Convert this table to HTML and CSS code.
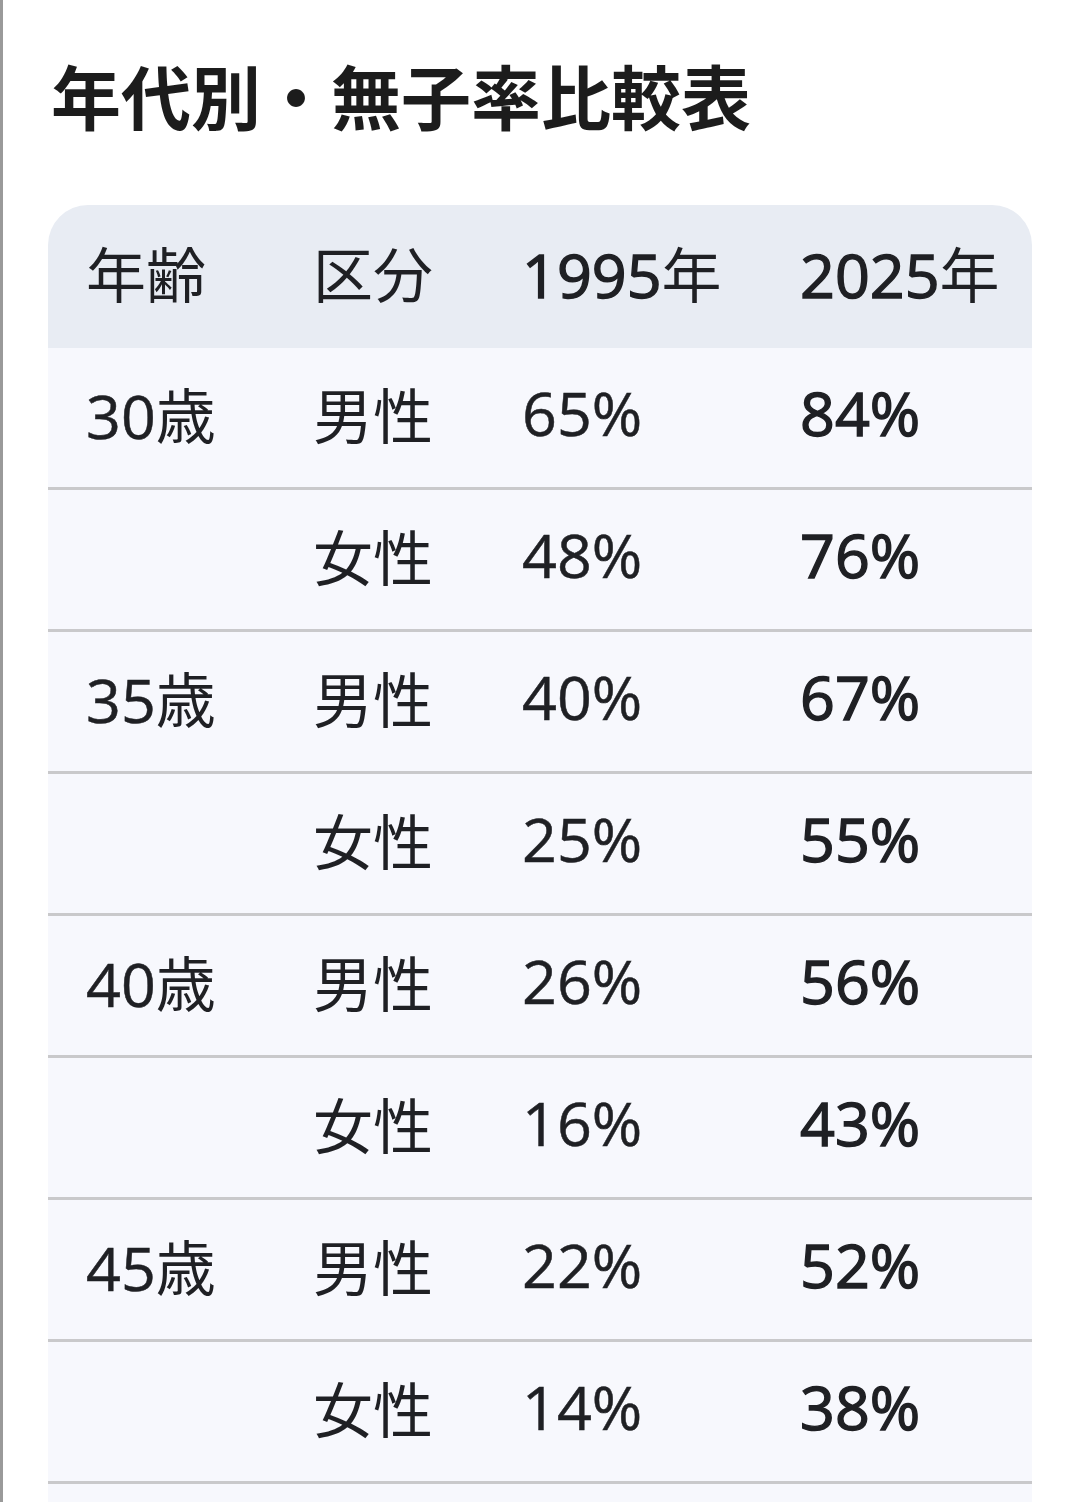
FILE: index.html
```html
<!DOCTYPE html>
<html lang="ja">
<head>
<meta charset="utf-8">
<link rel="stylesheet" href="styles.css">
</head>
<body>
<div class="page">
  <h1 class="title">年代別・無子率比較表</h1>
  <table class="tbl">
    <thead>
      <tr><th class="c1">年齢</th><th class="c2">区分</th><th class="c3"><span class="num strong">1995</span>年</th><th class="c4"><span class="num strong">2025</span>年</th></tr>
    </thead>
    <tbody>
      <tr><td><span class="num">30</span>歳</td><td>男性</td><td class="num">65%</td><td class="num strong">84%</td></tr>
      <tr><td></td><td>女性</td><td class="num">48%</td><td class="num strong">76%</td></tr>
      <tr><td><span class="num">35</span>歳</td><td>男性</td><td class="num">40%</td><td class="num strong">67%</td></tr>
      <tr><td></td><td>女性</td><td class="num">25%</td><td class="num strong">55%</td></tr>
      <tr><td><span class="num">40</span>歳</td><td>男性</td><td class="num">26%</td><td class="num strong">56%</td></tr>
      <tr><td></td><td>女性</td><td class="num">16%</td><td class="num strong">43%</td></tr>
      <tr><td><span class="num">45</span>歳</td><td>男性</td><td class="num">22%</td><td class="num strong">52%</td></tr>
      <tr><td></td><td>女性</td><td class="num">14%</td><td class="num strong">38%</td></tr>
      <tr><td></td><td></td><td></td><td></td></tr>
    </tbody>
  </table>
</div>
</body>
</html>
```
FILE: styles.css
```css
html, body {
  margin: 0;
  padding: 0;
  background: #ffffff;
}
body {
  font-family: "Noto Sans CJK JP", sans-serif;
  color: #1f2024;
  overflow: hidden;
}
.page {
  border-left: 3px solid #9a9a9a;
  padding: 50px 0 0 45px;
  height: 1502px;
  box-sizing: border-box;
}
.title {
  font-family: "Noto Sans CJK JP", sans-serif;
  font-size: 70px;
  font-weight: 700;
  line-height: 90px;
  margin: 0 0 65px 3px;
  color: #1c1c1c;
}
.tbl {
  width: 984px;
  border-collapse: separate;
  border-spacing: 0;
  table-layout: fixed;
  font-size: 60px;
}
.tbl th, .tbl td {
  text-align: left;
  padding: 0 0 10px 38px;
  font-weight: 400;
  white-space: nowrap;
  font-family: "Noto Sans CJK JP", sans-serif;
}
.tbl th {
  background: #e8ecf3;
  height: 133px;
}
.tbl th:first-child { border-top-left-radius: 40px; }
.tbl th:last-child { border-top-right-radius: 40px; }
.c1 { width: 189px; }
.c2 { width: 171px; }
.c3 { width: 240px; }
.c4 { width: 232px; }
.tbl td {
  background: #f7f8fd;
  height: 129px;
  border-bottom: 3px solid #c9c9cb;
}
.tbl .num {
  font-family: "Open Sans", "Noto Sans CJK JP", sans-serif;
  font-size: 61px;
  -webkit-text-stroke: 0.5px currentColor;
}
.tbl .strong {
  -webkit-text-stroke: 1.4px currentColor;
}
```
